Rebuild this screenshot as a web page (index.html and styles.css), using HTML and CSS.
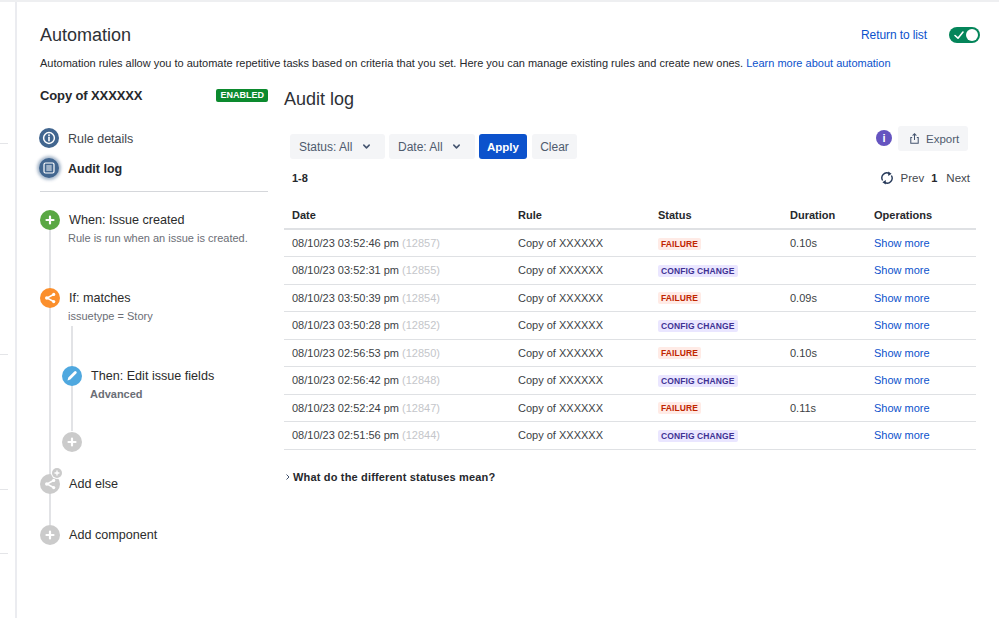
FILE: index.html
```html
<!DOCTYPE html>
<html lang="en">
<head>
<meta charset="utf-8">
<title>Automation</title>
<link rel="stylesheet" href="styles.css">
</head>
<body>
<div class="app">
  <aside class="strip">
    <div class="tick t1"></div>
    <div class="tick t2"></div>
    <div class="tick t3"></div>
    <div class="tick t4"></div>
  </aside>
  <main class="main">
    <header class="top">
      <h1>Automation</h1>
      <div class="top-right">
        <a class="link" href="#">Return to list</a>
        <span class="toggle">
          <svg class="toggle-check" viewBox="0 0 12 12"><path d="M2 6.5 5 9.2 10 3" fill="none" stroke="#fff" stroke-width="1.6" stroke-linecap="round" stroke-linejoin="round"/></svg>
          <span class="knob"></span>
        </span>
      </div>
    </header>
    <p class="desc">Automation rules allow you to automate repetitive tasks based on criteria that you set. Here you can manage existing rules and create new ones. <a class="link" href="#">Learn more about automation</a></p>
    <div class="columns">
      <nav class="side">
        <div class="rule-title"><strong>Copy of XXXXXX</strong><span class="enabled">ENABLED</span></div>
        <div class="nav-item">
          <span class="nav-icon"><svg viewBox="0 0 20 20"><circle cx="10" cy="10" r="5.4" fill="none" stroke="#fff" stroke-width="1.5"/><path d="M10 9.3v3.4" stroke="#fff" stroke-width="1.6" stroke-linecap="round"/><circle cx="10" cy="7.2" r=".9" fill="#fff"/></svg></span>
          <span>Rule details</span>
        </div>
        <div class="nav-item current">
          <span class="nav-icon glow"><svg viewBox="0 0 20 20"><rect x="5" y="5" width="10" height="10" rx="1.5" fill="none" stroke="#fff" stroke-width="1.2"/><path d="M7.3 8h5.4M7.3 10h5.4M7.3 12h5.4" stroke="#fff" stroke-width="1"/></svg></span>
          <span>Audit log</span>
        </div>
        <hr class="rule">
        <div class="flow">
          <div class="step when">
            <span class="dot green"><svg viewBox="0 0 20 20"><path d="M10 6.5v7M6.5 10h7" stroke="#fff" stroke-width="2.2" stroke-linecap="round"/></svg></span>
            <div>
              <div class="step-title">When: Issue created</div>
              <div class="step-sub">Rule is run when an issue is created.</div>
            </div>
          </div>
          <div class="step cond">
            <span class="dot orange"><svg viewBox="0 0 20 20"><path d="M13.5 6.5 7 10l6.5 3.5" fill="none" stroke="#fff" stroke-width="1.5"/><circle cx="6.8" cy="10" r="1.8" fill="#fff"/><circle cx="13.7" cy="6.4" r="1.6" fill="#fff"/><circle cx="13.7" cy="13.6" r="1.6" fill="#fff"/></svg></span>
            <div>
              <div class="step-title">If: matches</div>
              <div class="step-sub">issuetype = Story</div>
            </div>
          </div>
          <div class="nested">
            <div class="step then">
              <span class="dot blue"><svg viewBox="0 0 20 20"><path d="M5.5 14.5l.8-3 6-6a1.3 1.3 0 0 1 2 2l-6 6z" fill="#fff"/></svg></span>
              <div>
                <div class="step-title">Then: Edit issue fields</div>
                <div class="step-strong">Advanced</div>
              </div>
            </div>
            <div class="step add-inner">
              <span class="dot grey"><svg viewBox="0 0 20 20"><path d="M10 6.5v7M6.5 10h7" stroke="#fff" stroke-width="2.2" stroke-linecap="round"/></svg></span>
            </div>
          </div>
          <div class="step add-else">
            <span class="dot grey">
              <svg viewBox="0 0 20 20"><path d="M13.5 6.5 7 10l6.5 3.5" fill="none" stroke="#fff" stroke-width="1.5"/><circle cx="6.8" cy="10" r="1.8" fill="#fff"/><circle cx="13.7" cy="6.4" r="1.6" fill="#fff"/><circle cx="13.7" cy="13.6" r="1.6" fill="#fff"/></svg>
              <span class="mini"><svg viewBox="0 0 10 10"><path d="M5 3v4M3 5h4" stroke="#fff" stroke-width="1.3" stroke-linecap="round"/></svg></span>
            </span>
            <div class="step-title">Add else</div>
          </div>
          <div class="step add-comp">
            <span class="dot grey"><svg viewBox="0 0 20 20"><path d="M10 6.5v7M6.5 10h7" stroke="#fff" stroke-width="2.2" stroke-linecap="round"/></svg></span>
            <div class="step-title">Add component</div>
          </div>
        </div>
      </nav>
      <section class="content">
        <h2>Audit log</h2>
        <div class="toolbar">
          <div class="filters">
            <button class="btn status-btn">Status: All<svg class="chev" viewBox="0 0 10 10"><path d="M2 3.5 5 6.5 8 3.5" fill="none" stroke="#44546f" stroke-width="1.7" stroke-linecap="round" stroke-linejoin="round"/></svg></button>
            <button class="btn date-btn">Date: All<svg class="chev" viewBox="0 0 10 10"><path d="M2 3.5 5 6.5 8 3.5" fill="none" stroke="#44546f" stroke-width="1.7" stroke-linecap="round" stroke-linejoin="round"/></svg></button>
            <button class="btn primary">Apply</button>
            <button class="btn clear-btn">Clear</button>
          </div>
          <div class="actions">
            <span class="info">i</span>
            <button class="btn export"><svg viewBox="0 0 14 14"><path d="M4.5 6H3v6h8V6H9.5M7 8.5V2M5 3.8 7 1.8l2 2" fill="none" stroke="#44546f" stroke-width="1.1"/></svg>Export</button>
          </div>
        </div>
        <div class="pager-row">
          <strong>1-8</strong>
          <div class="pager">
            <svg viewBox="0 0 14 14"><path d="M2.600 9.500A5 5 0 0 1 9 2.400M11.400 4.500A5 5 0 0 1 5 11.600" fill="none" stroke="#253858" stroke-width="1.400"/><path d="M8.200 .4 11.600 2.800 8.200 5zM5.800 13.600 2.400 11.200 5.800 9z" fill="#253858"/></svg>
            <span>Prev</span><b>1</b><span>Next</span>
          </div>
        </div>
        <table class="log">
          <thead>
            <tr><th class="c-date">Date</th><th class="c-rule">Rule</th><th class="c-status">Status</th><th class="c-dur">Duration</th><th class="c-ops">Operations</th></tr>
          </thead>
          <tbody>
            <tr><td>08/10/23 03:52:46 pm <span class="id">(12857)</span></td><td>Copy of XXXXXX</td><td><span class="lozenge fail">FAILURE</span></td><td>0.10s</td><td><a class="link" href="#">Show more</a></td></tr>
            <tr><td>08/10/23 03:52:31 pm <span class="id">(12855)</span></td><td>Copy of XXXXXX</td><td><span class="lozenge cfg">CONFIG CHANGE</span></td><td></td><td><a class="link" href="#">Show more</a></td></tr>
            <tr><td>08/10/23 03:50:39 pm <span class="id">(12854)</span></td><td>Copy of XXXXXX</td><td><span class="lozenge fail">FAILURE</span></td><td>0.09s</td><td><a class="link" href="#">Show more</a></td></tr>
            <tr><td>08/10/23 03:50:28 pm <span class="id">(12852)</span></td><td>Copy of XXXXXX</td><td><span class="lozenge cfg">CONFIG CHANGE</span></td><td></td><td><a class="link" href="#">Show more</a></td></tr>
            <tr><td>08/10/23 02:56:53 pm <span class="id">(12850)</span></td><td>Copy of XXXXXX</td><td><span class="lozenge fail">FAILURE</span></td><td>0.10s</td><td><a class="link" href="#">Show more</a></td></tr>
            <tr><td>08/10/23 02:56:42 pm <span class="id">(12848)</span></td><td>Copy of XXXXXX</td><td><span class="lozenge cfg">CONFIG CHANGE</span></td><td></td><td><a class="link" href="#">Show more</a></td></tr>
            <tr><td>08/10/23 02:52:24 pm <span class="id">(12847)</span></td><td>Copy of XXXXXX</td><td><span class="lozenge fail">FAILURE</span></td><td>0.11s</td><td><a class="link" href="#">Show more</a></td></tr>
            <tr><td>08/10/23 02:51:56 pm <span class="id">(12844)</span></td><td>Copy of XXXXXX</td><td><span class="lozenge cfg">CONFIG CHANGE</span></td><td></td><td><a class="link" href="#">Show more</a></td></tr>
          </tbody>
        </table>
        <div class="expander"><svg viewBox="0 0 8 8"><path d="M2.500 1.500 5 4 2.500 6.500" fill="none" stroke="#42526e" stroke-width="1"/></svg><strong>What do the different statuses mean?</strong></div>
      </section>
    </div>
  </main>
</div>
</body>
</html>
```
FILE: styles.css
```css
* { box-sizing: border-box; }
html, body { margin: 0; height: 100%; overflow: hidden; background: #fff; }
body { font-family: "Liberation Sans", Arial, sans-serif; font-size: 12px; color: #33363b; }
.app { display: flex; height: 618px; border-top: 2px solid #eeeff1; }
.strip { width: 17px; flex: none; border-right: 2px solid #ebecf0; padding-right: 7px; }
.tick { height: 1px; background: #e4e5e8; }
.t1 { margin-top: 141px; }
.t2 { margin-top: 210px; }
.t3 { margin-top: 134px; }
.t4 { margin-top: 63px; }
.main { flex: 1; min-width: 0; padding: 0 23px 0 23px; }
.top { display: flex; justify-content: space-between; align-items: center; height: 52px; padding-top: 14px; margin: 0; }
h1 { margin: 0; font-size: 18px; line-height: 24px; font-weight: 400; color: #2e3136; }
.top-right { display: flex; align-items: center; gap: 22px; margin-right: -4px; }
.link { color: #0c52cc; text-decoration: none; }
.top-right .link { font-size: 12px; letter-spacing: -.1px; }
.toggle { position: relative; display: block; width: 31px; height: 16px; border-radius: 8px; background: #04855a; }
.toggle-check { position: absolute; left: 4px; top: 2px; width: 12px; height: 12px; }
.knob { position: absolute; right: 2px; top: 2px; width: 12px; height: 12px; border-radius: 50%; background: #fff; }
.desc { margin: 1px 0 0; font-size: 11px; line-height: 16px; color: #26282c; white-space: nowrap; }
.columns { display: flex; gap: 16px; }
.side { width: 228px; flex: none; padding-top: 16px; }
.rule-title { display: flex; justify-content: space-between; align-items: center; height: 16px; }
.rule-title strong { font-size: 13px; letter-spacing: -.12px; color: #26282c; font-weight: 700; }
.enabled { background: #0c8a2e; color: #fff; font-size: 9px; font-weight: 700; line-height: 13px; height: 13px; padding: 0 4px; border-radius: 2px; }
.nav-item { display: flex; align-items: center; gap: 9px; height: 20px; font-size: 12.500px; color: #44474d; margin-bottom: 10px; }
.nav-item > span:last-child { padding-top: 1px; }
.rule-title + .nav-item { margin-top: 25px; }
.nav-item.current { font-weight: 700; color: #26282c; }
.nav-icon { width: 20px; height: 20px; border-radius: 50%; background: #42668f; flex: none; display: block; margin-left: -1px; }
.nav-icon svg { display: block; width: 20px; height: 20px; }
.glow { box-shadow: 0 0 3px 2px rgba(66, 102, 143, .45); }
.rule { border: 0; border-top: 1px solid #d5d7db; margin: 13px 0 0; }
.flow { position: relative; padding-top: 18px; }
.flow::before { content: ""; position: absolute; left: 9px; top: 30px; height: 303px; width: 2px; background: #e2e3e6; }
.step { position: relative; display: flex; gap: 9px; align-items: flex-start; }
.dot { position: relative; flex: none; display: block; width: 20px; height: 20px; border-radius: 50%; }
.dot > svg { display: block; width: 20px; height: 20px; }
.green { background: #5aa844; }
.orange { background: #fb8f2c; }
.blue { background: #4fa8df; }
.grey { background: #cbcbcb; }
.step-title { font-size: 12.600px; line-height: 20px; color: #2b2b2b; }
.step-sub { font-size: 11px; line-height: 14px; color: #6b6e76; margin-top: 1px; margin-left: -1px; }
.step-strong { font-size: 11px; font-weight: 700; line-height: 14px; color: #6b6e76; margin-top: 1px; margin-left: -1px; }
.when { height: 78px; }
.cond { height: 78px; }
.nested { position: relative; padding-left: 22px; }
.nested::before { content: ""; position: absolute; left: 31px; top: -40px; height: 105px; width: 2px; background: #e2e3e6; }
.then { height: 66px; }
.add-inner { height: 42px; }
.add-else { height: 51px; }
.mini { position: absolute; right: -2px; top: -6px; width: 10px; height: 10px; border-radius: 50%; background: #cbcbcb; box-shadow: 0 0 0 1px #fff; display: block; }
.mini svg { display: block; width: 10px; height: 10px; }
.content { flex: 1; min-width: 0; }
h2 { margin: 0; font-size: 18px; line-height: 24px; font-weight: 400; color: #2e3136; padding-top: 16px; }
.toolbar { display: flex; justify-content: space-between; padding: 0 8px 0 6px; height: 57px; }
.filters { display: flex; gap: 4px; padding-top: 23px; align-items: flex-start; }
.btn { border: 0; background: #f4f5f7; color: #4f5b6e; font: inherit; font-size: 12px; height: 25px; border-radius: 3px; padding: 0; display: flex; align-items: center; }
.status-btn { width: 95px; padding-left: 9px; }
.date-btn { width: 86px; padding-left: 9px; }
.chev { width: 9px; height: 9px; margin-left: auto; margin-right: 14px; }
.primary { width: 48px; background: #0c52cc; color: #fff; font-weight: 700; font-size: 11.500px; justify-content: center; }
.clear-btn { width: 45px; margin-left: 1px; justify-content: center; }
.actions { display: flex; gap: 6px; padding-top: 15px; align-items: flex-start; }
.info { display: block; width: 16px; height: 16px; margin-top: 4px; border-radius: 50%; background: #6554c0; color: #fff; font-size: 11px; font-weight: 700; line-height: 16px; text-align: center; }
.export { width: 70px; padding-left: 10px; gap: 5px; font-size: 11.500px; }
.export svg { width: 13px; height: 13px; }
.pager-row { display: flex; justify-content: space-between; align-items: center; height: 20px; padding: 0 6px 0 8px; font-size: 11px; color: #26282c; }
.pager { display: flex; align-items: center; gap: 9px; font-size: 11.500px; color: #44474d; }
.pager svg { width: 14px; height: 14px; margin-right: -2px; }
.pager b { color: #26282c; font-weight: 700; font-size: 11px; margin-left: -2px; }
.log { width: 692px; table-layout: fixed; border-collapse: collapse; margin-top: 18px; font-size: 11px; color: #3c3f45; }
.log th { text-align: left; font-weight: 700; color: #26282c; font-size: 11px; height: 23px; padding: 0 0 4px 8px; border-bottom: 2px solid #dfe1e4; }
.log td { height: 27.500px; padding: 0 0 0 8px; border-bottom: 1px solid #dfe1e4; white-space: nowrap; }
.c-date { width: 226px; }
.c-rule { width: 140px; }
.c-status { width: 132px; }
.c-dur { width: 84px; }
.c-ops { width: 110px; }
.id { color: #c4c6ca; }
.lozenge { display: inline-block; font-size: 8.500px; font-weight: 700; line-height: 12px; padding: 0 3px; border-radius: 2px; letter-spacing: .1px; vertical-align: middle; }
.fail { background: #ffebe6; color: #bf2600; }
.cfg { background: #eae6ff; color: #403294; }
.expander { display: flex; align-items: center; gap: 1px; margin-top: 21px; font-size: 11px; letter-spacing: .17px; color: #26282c; }
.expander svg { width: 8px; height: 8px; }
```
